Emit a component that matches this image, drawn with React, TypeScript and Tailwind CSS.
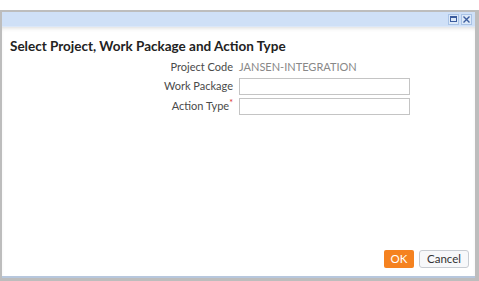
export default function App() {
  return (
    <div className="w-[479px] h-[281px] bg-white pt-[10px] font-['Lato',sans-serif]">
      <div className="h-[271px] flex flex-col bg-[#bdbdbd] pl-[2px] pr-[4px] pt-[2px]">
        {/* Title bar */}
        <div className="h-[15px] flex items-center justify-end gap-[2px] pr-[3px] bg-[#cfe0f7] border-b border-[#dbe7f8]">
          <span className="w-[11px] h-[11px] flex items-center justify-center bg-[#dde9f8] border border-[#a9c3e6]">
            <span className="block w-[7px] h-[6px] border border-[#3b5c9e] border-t-2" />
          </span>
          <span className="w-[11px] h-[11px] flex items-center justify-center bg-[#dde9f8] border border-[#a9c3e6]">
            <svg width="7" height="7" viewBox="0 0 7 7">
              <path d="M0.5 0.5 L6.5 6.5 M6.5 0.5 L0.5 6.5" stroke="#3b5c9e" strokeWidth="1.4" />
            </svg>
          </span>
        </div>

        {/* Body */}
        <div className="flex-1 flex flex-col bg-white shadow-[inset_0_3px_4px_-2px_rgba(0,0,0,0.15)]">
          <h1 className="pt-[10px] pl-[8px] text-[13.5px] font-bold text-[#222] leading-[18px]">
            Select Project, Work Package and Action Type
          </h1>

          <div className="mt-[3px] grid grid-cols-[231px_171px] gap-x-[6px] gap-y-[3px] items-center text-[11px] text-[#4a4a4a]">
            <span className="text-right leading-[17px]">Project Code</span>
            <span className="text-[#888] leading-[17px]">JANSEN-INTEGRATION</span>

            <span className="text-right">Work Package</span>
            <div className="h-[17px] border border-[#c4c4c4] bg-white" />

            <span className="text-right">
              Action Type<span className="text-[#d9302c] align-top text-[9px] leading-none">*</span>
            </span>
            <div className="h-[17px] border border-[#c4c4c4] bg-white" />
          </div>

          <div className="mt-auto mb-[8px] flex justify-end gap-[5px] pr-[6px]">
            <button className="h-[18px] w-[30px] rounded-[2px] bg-[#f58220] text-white text-[11.5px] leading-none">
              OK
            </button>
            <button className="h-[18px] px-[7px] rounded-[3px] bg-[#f7f8fa] border border-[#c8ccd2] text-[#333] text-[11.5px] leading-none">
              Cancel
            </button>
          </div>
          <div className="h-[2px] bg-[#b7c7dd]" />
        </div>
        <div className="h-[3px]" />
      </div>
    </div>
  );
}
